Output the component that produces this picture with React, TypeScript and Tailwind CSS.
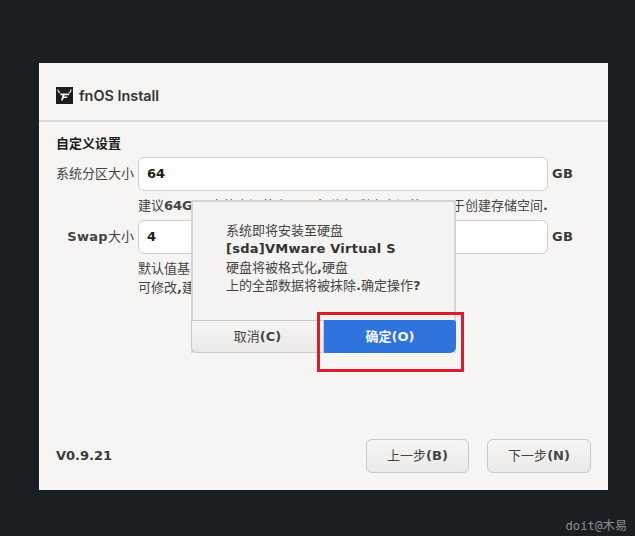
const font = "font-['DejaVu_Sans','Noto_Sans_CJK_SC',sans-serif]";

function Logo() {
  return (
    <svg width="17" height="17" viewBox="0 0 17 17" className="shrink-0">
      <rect width="17" height="17" fill="#1c1c1c" />
      <path d="M2 2.5c0 1.8.7 2.8 2.2 3.2M15 2.5c0 1.8-.7 2.8-2.2 3.2" fill="none" stroke="#f2f2f2" strokeWidth="1.1" />
      <path d="M4.2 6.6h9.4l-.7 1.7H8.6l-.4 1.2h3.4l-.6 1.5H7.7l-1 2.6H5l1.5-5.3H4.6z" fill="#f2f2f2" />
    </svg>
  );
}

function Field({ label, value }: { label: React.ReactNode; value: string }) {
  return (
    <div className="flex items-center h-[34px]">
      <div className="w-[78px] text-right text-[#444] shrink-0 whitespace-nowrap">{label}</div>
      <div className="ml-[4px] w-[410px] h-[34px] bg-white border border-[#cfcfcf] rounded-[6px] pl-2 flex items-center font-bold text-[#1c1c1c]">{value}</div>
      <div className="ml-1 font-bold text-[#3a3a3a] tracking-[0.3px]">GB</div>
    </div>
  );
}

export default function App() {
  return (
    <div className={`w-[635px] h-[536px] bg-[#1b1e23] pt-[63px] pl-[39px] relative overflow-hidden text-[13px] ${font}`}>
      <div className="relative w-[569px] h-[427px] bg-[#f6f5f4] flex flex-col">
        <div className="h-[59px] border-b-2 border-[#dcdbd9] flex items-center gap-[6px] pl-[17px] pt-[8px] shrink-0">
          <Logo />
          <span className="font-['Inter',sans-serif] font-semibold text-[14.4px] text-[#333]">fnOS Install</span>
        </div>
        <div className="pl-[17px] flex-1 flex flex-col">
          <div className="mt-[13px] h-[18px] leading-[18px] font-bold text-[#1c1c1c]">自定义设置</div>
          <div className="mt-[4px]"><Field label="系统分区大小" value="64" /></div>
          <div className="ml-[82px] mt-[5px] w-[410px] h-[20px] leading-[20px] text-[#444] whitespace-nowrap flex justify-between">
            <span>建议<b>64G</b>,更大的空间将占用更多磁盘,剩余空间将用</span>
            <span>于创建存储空间<b>.</b></span>
          </div>
          <div className="mt-[4px]"><Field label={<><b className="tracking-[0.3px]">Swap</b>大小</>} value="4" /></div>
          <div className="ml-[82px] mt-[5px] w-[54px] overflow-hidden leading-[19px] text-[#444] whitespace-nowrap">
            <div>默认值基</div>
            <div>可修改<b>,</b>建</div>
          </div>
          <div className="mt-auto mb-[17px] mr-[17px] flex items-center">
            <span className="font-bold text-[#3a3a3a] flex-1">V0.9.21</span>
            <div className="flex gap-[18px]">
              <button className="w-[103px] h-[34px] rounded-[6px] border border-[#c9c9c9] bg-gradient-to-b from-[#f6f5f4] to-[#eceae8] text-[#444]">上一步<b>(B)</b></button>
              <button className="w-[104px] h-[34px] rounded-[6px] border border-[#c9c9c9] bg-gradient-to-b from-[#f6f5f4] to-[#eceae8] text-[#444]">下一步<b>(N)</b></button>
            </div>
          </div>
        </div>
        <div className="absolute left-[152px] top-[137px] w-[265px] h-[153px] bg-[#f5f4f2] border-2 border-b-0 border-[#d6d5d3] flex flex-col">
          <div className="pl-[33px] pt-[20px] flex-1 text-[#444] leading-[18px] whitespace-nowrap">
            <div>系统即将安装至硬盘</div>
            <div className="font-bold text-[#333] tracking-[0.25px]">[sda]VMware Virtual S</div>
            <div className="mt-[1px]">硬盘将被格式化<b>,</b>硬盘</div>
            <div>上的全部数据将被抹除<b>.</b>确定操作<b>?</b></div>
          </div>
          <div className="flex h-[33px] -mx-[2px]">
            <button className="w-[133px] rounded-bl-[6px] border border-[#c9c9c9] bg-gradient-to-b from-[#f6f5f4] to-[#eceae8] text-[#444]">取消<b>(C)</b></button>
            <button className="w-[132px] rounded-br-[6px] rounded-tr-[3px] bg-[#2f74dc] text-[#f4f7fc] font-bold">确定(O)</button>
          </div>
        </div>
        <div className="absolute left-[278px] top-[249px] w-[147px] h-[60px] border-[3px] border-[#e0192c]" />
      </div>
      <div className="absolute right-[8px] bottom-[1px] font-['DejaVu_Sans_Mono','Noto_Sans_CJK_SC',monospace] text-[12.3px] text-[#8b8e92]">doit@木易</div>
    </div>
  );
}
